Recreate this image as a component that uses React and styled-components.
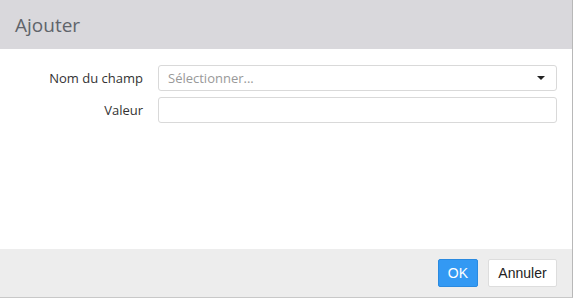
import React from "react";
import styled, { createGlobalStyle } from "styled-components";

const GlobalStyle = createGlobalStyle`
  html, body {
    margin: 0;
    padding: 0;
    background: #ffffff;
  }
  * { box-sizing: border-box; }
`;

const Dialog = styled.div`
  width: 573px;
  height: 298px;
  display: flex;
  flex-direction: column;
  background: #ffffff;
  border-right: 1px solid #b8b8b8;
  border-bottom: 1px solid #c8c8c8;
  font-family: "Open Sans", "Noto Sans", sans-serif;
`;

const Header = styled.div`
  height: 49px;
  flex-shrink: 0;
  background: #d9d8dc;
  display: flex;
  align-items: center;
  padding-left: 15px;
  h2 {
    margin: 0;
    font-weight: 400;
    font-size: 19px;
    color: #5f646a;
  }
`;

const Body = styled.div`
  flex: 1;
  display: grid;
  grid-template-columns: 143px 1fr;
  column-gap: 15px;
  row-gap: 6px;
  align-content: start;
  padding: 16px 15px 0 0;
`;

const Label = styled.label`
  text-align: right;
  font-size: 13px;
  color: #333333;
  line-height: 26px;
`;

const Field = styled.div`
  position: relative;
  height: 26px;
  border: 1px solid #d9d9d9;
  border-radius: 3px;
  background: #ffffff;
  display: flex;
  align-items: center;
  padding: 0 9px;
  font-size: 13px;
  color: #999999;
`;

const Caret = styled.span`
  position: absolute;
  right: 11px;
  top: 10px;
  width: 0;
  height: 0;
  border-left: 4px solid transparent;
  border-right: 4px solid transparent;
  border-top: 4px solid #222222;
`;

const Footer = styled.div`
  height: 48px;
  flex-shrink: 0;
  background: #ededed;
  display: flex;
  justify-content: flex-end;
  align-items: center;
  gap: 10px;
  padding-right: 15px;
`;

const Button = styled.button`
  height: 28px;
  padding: 0 ${(p) => (p.$primary ? "9px" : "8px")};
  min-width: ${(p) => (p.$primary ? "40px" : "69px")};
  font-family: "Liberation Sans", Arial, sans-serif;
  font-size: 14px;
  border-radius: 2px;
  border: 1px solid ${(p) => (p.$primary ? "#2a8ae0" : "#dddddd")};
  background: ${(p) => (p.$primary ? "#3399f3" : "#ffffff")};
  color: ${(p) => (p.$primary ? "#ffffff" : "#222222")};
`;

export default function App() {
  return (
    <>
      <GlobalStyle />
      <Dialog>
        <Header>
          <h2>Ajouter</h2>
        </Header>
        <Body>
          <Label>Nom du champ</Label>
          <Field>
            Sélectionner...
            <Caret />
          </Field>
          <Label>Valeur</Label>
          <Field />
        </Body>
        <Footer>
          <Button $primary>OK</Button>
          <Button>Annuler</Button>
        </Footer>
      </Dialog>
    </>
  );
}
